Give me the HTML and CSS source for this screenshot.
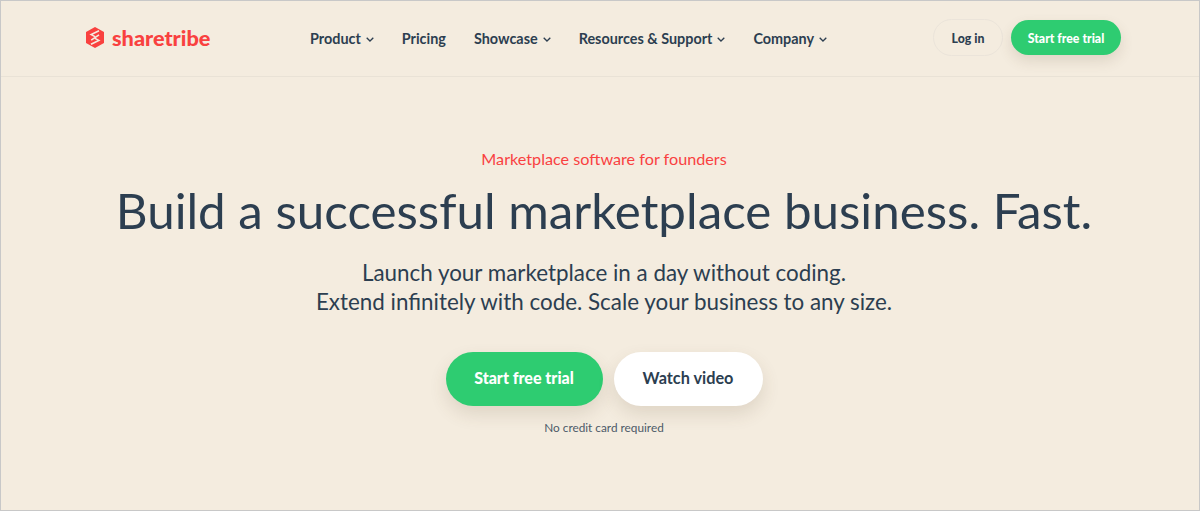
FILE: index.html
```html
<!DOCTYPE html>
<html lang="en">

<head>
  <meta charset="UTF-8" />
  <meta name="viewport" content="width=device-width, initial-scale=1.0"/>
  <title>Sharetribe</title>
  <link rel="stylesheet" href="styles.css">
</head>

<body>
  <div class="page">
    <header class="topbar">
      <a class="logo">
        <svg class="logo-mark" viewBox="0 0 18 21" width="18" height="21">
          <path d="M9 0L18 5V16L9 21L0 16V5Z" fill="#f9413f"/>
          <path d="M13 3.8L5.2 7.6L9 9.6M9 11.4L12.8 13.4L5 17.2M13 7.8L5.2 13.2" fill="none" stroke="#f5ecdf" stroke-width="1.6"/>
        </svg>
        <span class="logo-text">sharetribe</span>
      </a>
      <nav class="menu">
        <a class="menu-item">Product <svg class="chev" viewBox="0 0 8 5" width="8" height="5"><path d="M0.7 0.7L4 4L7.3 0.7" fill="none" stroke="#2c3e50" stroke-width="1.3"/></svg></a>
        <a class="menu-item">Pricing</a>
        <a class="menu-item">Showcase <svg class="chev" viewBox="0 0 8 5" width="8" height="5"><path d="M0.7 0.7L4 4L7.3 0.7" fill="none" stroke="#2c3e50" stroke-width="1.3"/></svg></a>
        <a class="menu-item">Resources &amp; Support <svg class="chev" viewBox="0 0 8 5" width="8" height="5"><path d="M0.7 0.7L4 4L7.3 0.7" fill="none" stroke="#2c3e50" stroke-width="1.3"/></svg></a>
        <a class="menu-item">Company <svg class="chev" viewBox="0 0 8 5" width="8" height="5"><path d="M0.7 0.7L4 4L7.3 0.7" fill="none" stroke="#2c3e50" stroke-width="1.3"/></svg></a>
      </nav>
      <div class="top-actions">
        <a class="btn-login">Log in</a>
        <a class="btn-trial">Start free trial</a>
      </div>
    </header>

    <main class="hero">
      <p class="eyebrow">Marketplace software for founders</p>
      <h1 class="headline">Build a successful marketplace business. Fast.</h1>
      <p class="lead">Launch your marketplace in a day without coding.<br>Extend infinitely with code. Scale your business to any size.</p>
      <div class="cta-row">
        <a class="cta cta-green">Start free trial</a>
        <a class="cta cta-white">Watch video</a>
      </div>
      <p class="note">No credit card required</p>
    </main>
  </div>
</body>

</html>
```
FILE: styles.css
```css
* { box-sizing: border-box; }
html, body { margin: 0; padding: 0; height: 100%; }
body { font-family: 'Lato', sans-serif; color: #2c3e50; background: #f4ecdf; overflow: hidden; }
.page { height: 511px; border: 1px solid #c8c8c8; display: flex; flex-direction: column; background: #f4ecdf; }

.topbar { height: 76px; flex-shrink: 0; display: flex; align-items: center; padding: 0 78px 2px 85px; border-bottom: 1px solid #e9e2d6; }
.logo { display: flex; align-items: center; gap: 8px; width: 224px; }
.logo-mark { display: block; }
.logo-text { font-size: 21.7px; font-weight: 900; color: #f9413f; }

.menu { display: flex; align-items: center; gap: 28px; padding-top: 2px; font-size: 14.4px; font-weight: 700; }
.menu-item { display: flex; align-items: center; gap: 5px; white-space: nowrap; }
.chev { display: block; margin-top: 2px; }

.top-actions { margin-left: auto; display: flex; align-items: center; gap: 8px; font-size: 12.3px; font-weight: 900; }
.btn-login { width: 70px; height: 37px; padding-top: 2px; border: 1px solid #ebe4da; border-radius: 19px; display: flex; align-items: center; justify-content: center; }
.btn-trial { width: 110px; height: 35px; padding-top: 2px; border-radius: 18px; background: #2ecc71; color: #fff; display: flex; align-items: center; justify-content: center; box-shadow: 0 6px 14px rgba(90, 70, 40, 0.14); }

.hero { display: flex; flex-direction: column; align-items: center; padding-left: 8px; }
.eyebrow { margin: 72px 0 0; font-size: 16.2px; line-height: 20px; color: #f9413f; }
.headline { margin: 9px 0 0; font-size: 49.3px; line-height: 64px; font-weight: 400; white-space: nowrap; }
.lead { margin: 16px 0 0; font-size: 22.4px; line-height: 29px; text-align: center; }
.cta-row { margin-top: 36px; display: flex; gap: 11px; }
.cta { height: 54px; padding-bottom: 3px; border-radius: 27px; display: flex; align-items: center; justify-content: center; font-size: 16px; box-shadow: 0 8px 18px rgba(90, 70, 40, 0.14); }
.cta-green { width: 157px; background: #2ecc71; color: #fff; font-weight: 900; }
.cta-white { width: 149px; background: #fff; font-size: 16.3px; font-weight: 700; }
.note { margin: 14px 0 0; font-size: 11.8px; line-height: 16px; color: #4d5a68; }
```
